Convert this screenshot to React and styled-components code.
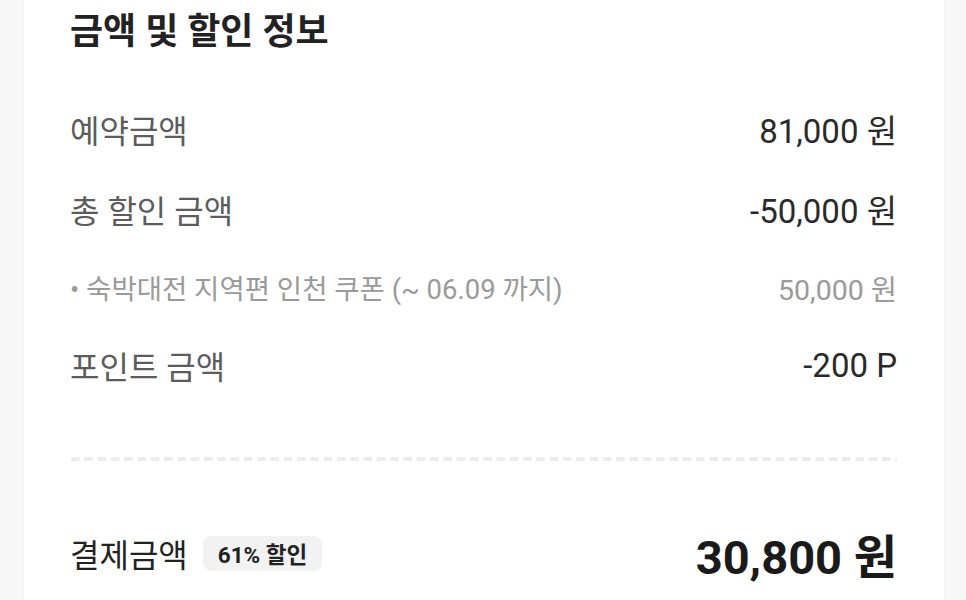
import styled, { createGlobalStyle } from "styled-components";

const GlobalStyle = createGlobalStyle`
  html, body {
    margin: 0;
    padding: 0;
    background: #f7f7f7;
  }
  body {
    font-family: Roboto, "Noto Sans CJK KR", sans-serif;
    -webkit-font-smoothing: antialiased;
  }
`;

const Page = styled.div`
  width: 966px;
  height: 600px;
  overflow: hidden;
  display: flex;
  justify-content: center;
  padding-left: 2px;
  box-sizing: border-box;
`;

const Card = styled.section`
  width: 922px;
  background: #fff;
  padding: 0 47px 0 46px;
  box-sizing: border-box;
  border-left: 1px solid #f0f0f0;
  border-right: 1px solid #f0f0f0;
`;

const Title = styled.h2`
  margin: 0;
  padding-top: 10px;
  height: 54px;
  font-size: 36px;
  font-weight: 700;
  color: #222;
  line-height: 44px;
`;

const List = styled.div`
  display: flex;
  flex-direction: column;
  padding-top: 25px;
`;

const Row = styled.div`
  display: flex;
  justify-content: space-between;
  align-items: center;
  height: ${(p) => (p.$sub ? 76 : 80)}px;
`;

const Label = styled.span`
  font-size: ${(p) => (p.$sub ? 27.5 : 32)}px;
  color: ${(p) => (p.$sub ? "#9a9a9a" : "#5c5c5c")};
`;

const Value = styled.span`
  font-size: ${(p) => (p.$sub ? 28.5 : 33)}px;
  color: ${(p) => (p.$sub ? "#9a9a9a" : "#2a2a2a")};
`;

const Divider = styled.hr`
  margin: 52px 0 0 1px;
  height: 4px;
  border: 0;
  background-image: linear-gradient(to right, #ececec 9px, transparent 9px);
  background-size: 13.3px 4px;
`;

const TotalRow = styled.div`
  display: flex;
  justify-content: space-between;
  align-items: center;
  margin-top: 70px;
  height: 44px;
`;

const TotalLeft = styled.div`
  display: flex;
  align-items: center;
  gap: 15px;
`;

const TotalLabel = styled.span`
  font-size: 32px;
  color: #222;
`;

const Badge = styled.span`
  display: inline-flex;
  align-items: center;
  height: 35px;
  padding: 0 15px;
  border-radius: 8px;
  background: #f2f2f2;
  font-size: 22.5px;
  font-weight: 700;
  color: #222;
`;

const TotalValue = styled.span`
  font-size: 47px;
  font-weight: 700;
  color: #1a1a1a;
`;

const rows = [
  { label: "예약금액", value: "81,000 원" },
  { label: "총 할인 금액", value: "-50,000 원" },
  { label: "• 숙박대전 지역편 인천 쿠폰 (~ 06.09 까지)", value: "50,000 원", sub: true },
  { label: "포인트 금액", value: "-200 P" },
];

export default function App() {
  return (
    <>
      <GlobalStyle />
      <Page>
        <Card>
          <Title>금액 및 할인 정보</Title>
          <List>
            {rows.map((r) => (
              <Row key={r.label} $sub={r.sub}>
                <Label $sub={r.sub}>{r.label}</Label>
                <Value $sub={r.sub}>{r.value}</Value>
              </Row>
            ))}
          </List>
          <Divider />
          <TotalRow>
            <TotalLeft>
              <TotalLabel>결제금액</TotalLabel>
              <Badge>61% 할인</Badge>
            </TotalLeft>
            <TotalValue>30,800 원</TotalValue>
          </TotalRow>
        </Card>
      </Page>
    </>
  );
}
